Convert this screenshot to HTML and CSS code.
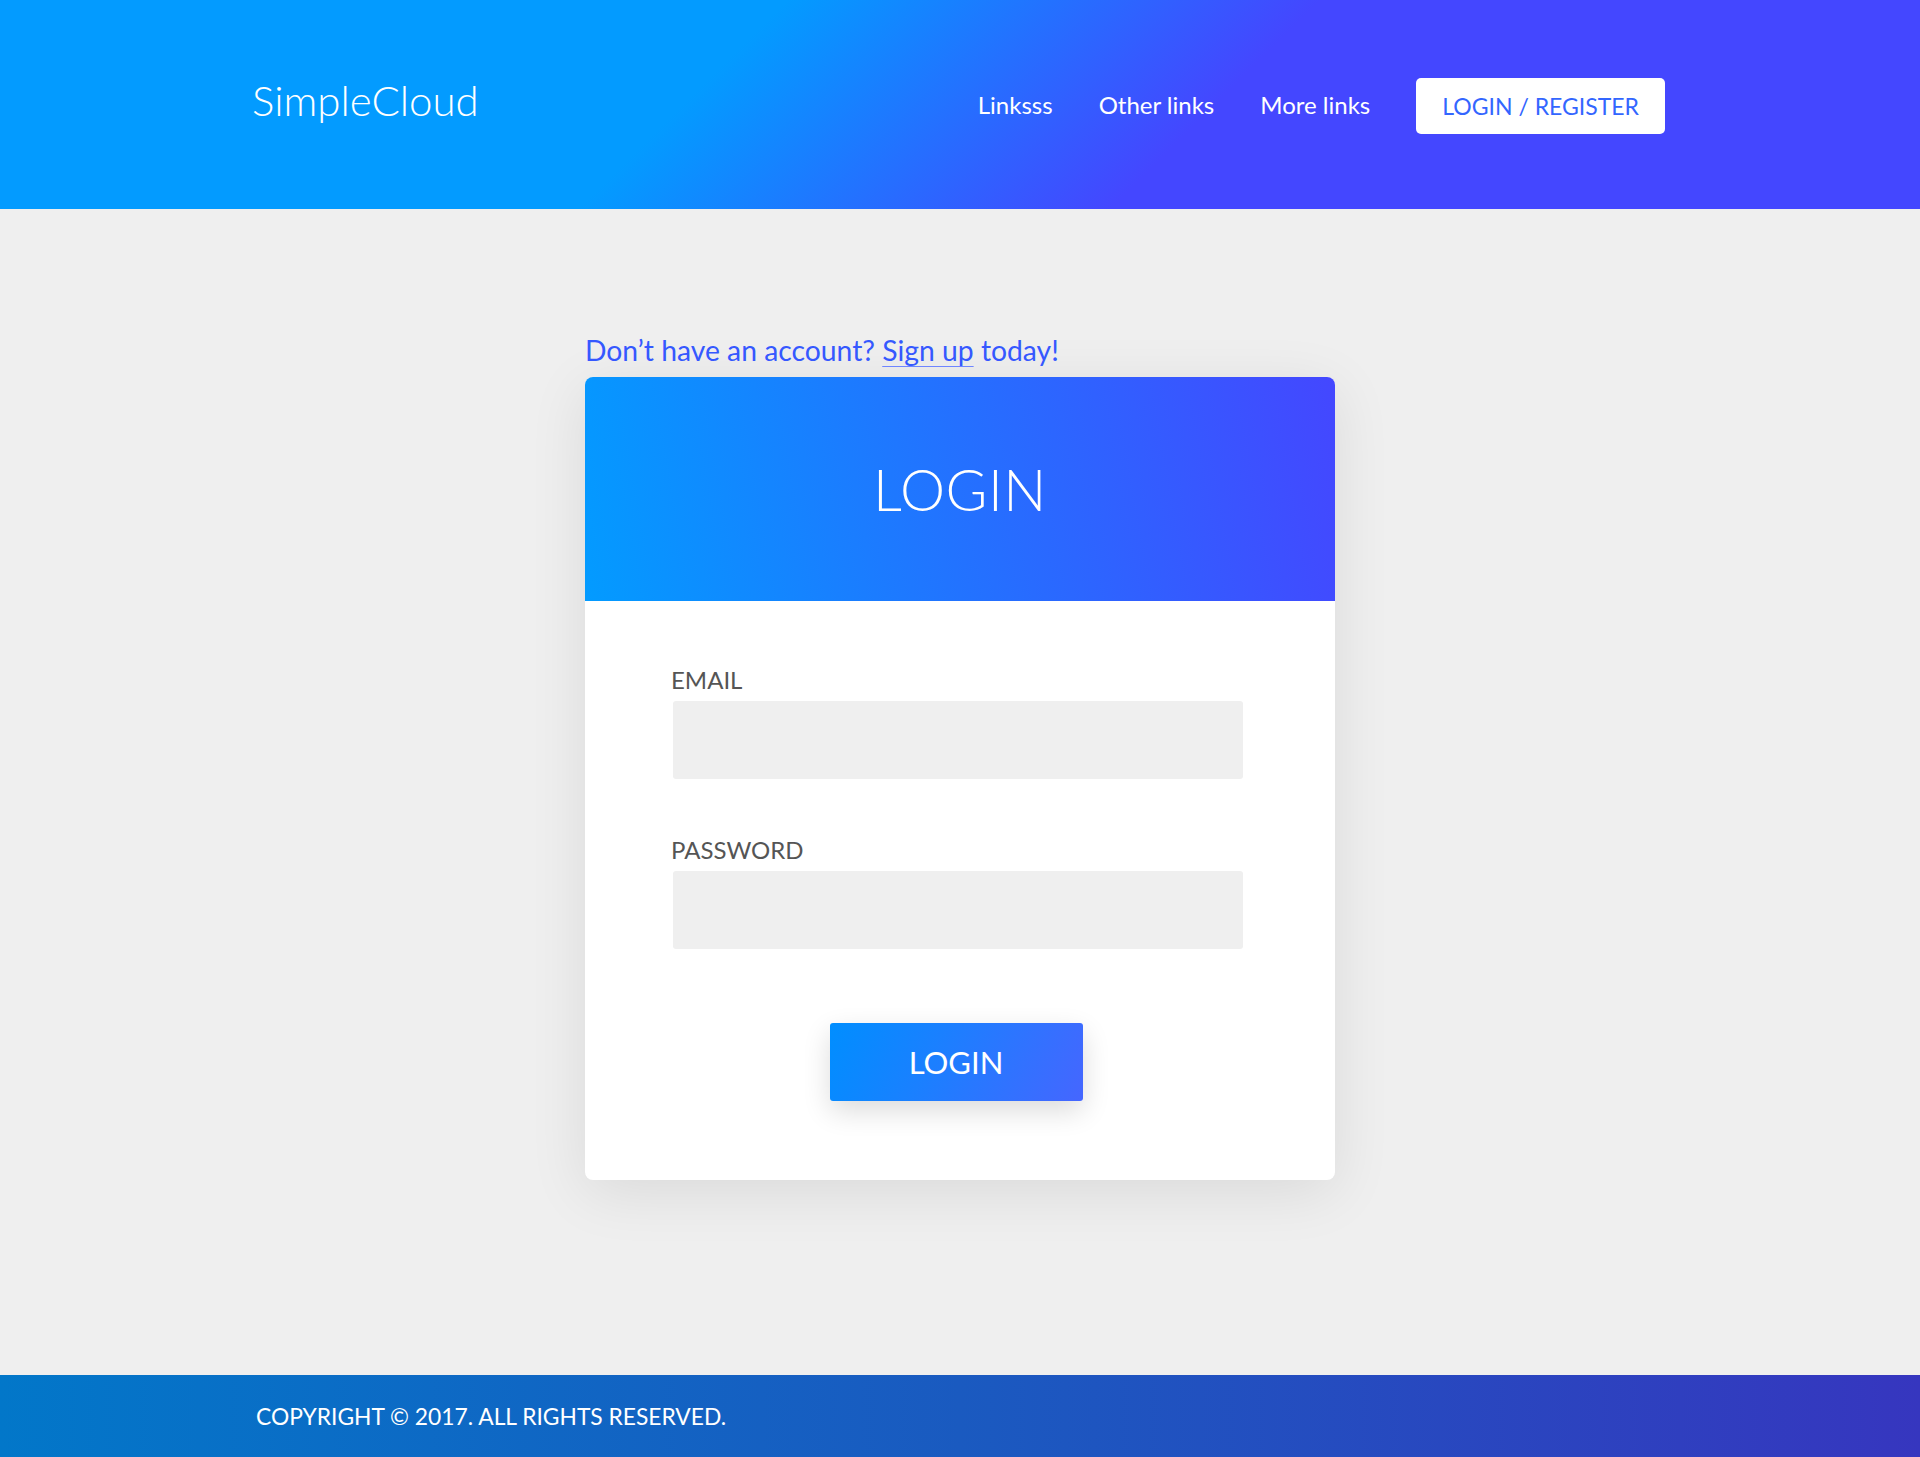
FILE: index.html
```html
<!DOCTYPE html>
<html lang="en">
<head>
<meta charset="utf-8">
<title>SimpleCloud - Login</title>
<link rel="stylesheet" href="styles.css">
</head>
<body>
<header class="topbar">
  <div class="container topbar-inner">
    <a class="logo" href="#">SimpleCloud</a>
    <nav class="nav">
      <a class="nav-link" href="#">Linksss</a>
      <a class="nav-link" href="#">Other links</a>
      <a class="nav-link" href="#">More links</a>
      <a class="nav-btn" href="#">LOGIN / REGISTER</a>
    </nav>
  </div>
</header>
<main class="main">
  <div class="login-wrap">
    <p class="signup">Don’t have an account? <a href="#">Sign up</a> today!</p>
    <section class="card">
      <div class="card-head">
        <h1 class="card-title">LOGIN</h1>
      </div>
      <form class="card-body">
        <label class="field-label" for="email">EMAIL</label>
        <input class="field-input" id="email" type="email">
        <label class="field-label field-label-2" for="password">PASSWORD</label>
        <input class="field-input" id="password" type="password">
        <div class="actions">
          <button class="submit" type="button">LOGIN</button>
        </div>
      </form>
    </section>
  </div>
</main>
<footer class="footer">
  <div class="container footer-inner">COPYRIGHT © 2017. ALL RIGHTS RESERVED.</div>
</footer>
</body>
</html>
```

FILE: styles.css
```css
* { box-sizing: border-box; }

html, body { margin: 0; padding: 0; }

body {
  font-family: Lato, "Open Sans", sans-serif;
  background: #efefef;
  color: #555;
  min-height: 1457px;
  display: flex;
  flex-direction: column;
}

a { text-decoration: none; }

.container {
  width: 1410px;
  margin: 0 auto;
}

.topbar {
  height: 209px;
  background: linear-gradient(135deg, #039bff 0%, #039bff 37%, #4447ff 62%, #4447ff 100%);
}

.topbar-inner {
  height: 100%;
  display: flex;
  align-items: center;
  justify-content: space-between;
}

.logo {
  color: #fff;
  font-size: 42px;
  font-weight: 300;
  margin-left: -3px;
  margin-top: -10px;
}

.nav {
  display: flex;
  align-items: center;
  gap: 46px;
}

.nav-link {
  color: #fff;
  font-size: 24px;
}

.nav-btn {
  display: block;
  background: #fff;
  color: #3366ff;
  font-size: 23px;
  height: 56px;
  line-height: 56px;
  padding: 0 26px;
  border-radius: 5px;
  margin-top: 2px;
}

.main {
  flex: 1;
  display: flex;
  justify-content: center;
}

.login-wrap {
  width: 750px;
  margin-top: 123px;
}

.signup {
  margin: 0 0 9px;
  font-size: 28.3px;
  line-height: 36px;
  color: #3558ff;
}

.signup a {
  color: #3558ff;
  text-decoration: underline;
  text-decoration-thickness: 1px;
  text-underline-offset: 5px;
  text-decoration-color: #6f86ff;
}

.card {
  background: #fff;
  border-radius: 8px;
  overflow: hidden;
  box-shadow: 0 12px 60px rgba(0, 0, 0, 0.09);
}

.card-head {
  height: 224px;
  display: flex;
  align-items: center;
  justify-content: center;
  background: linear-gradient(80deg, #039bff 0%, #4447ff 100%);
}

.card-title {
  margin: 0;
  color: #fff;
  font-size: 57px;
  font-weight: 300;
  letter-spacing: 0.5px;
}

.card-body {
  display: flex;
  flex-direction: column;
  padding: 63px 92px 79px 88px;
}

.field-label {
  font-size: 24px;
  line-height: 32px;
  color: #555;
  margin-left: -2px;
}

.field-label-2 {
  margin-top: 55px;
}

.field-input {
  margin-top: 5px;
  height: 78px;
  border: none;
  border-radius: 3px;
  background: #efefef;
  font: inherit;
  padding: 0 16px;
  outline: none;
}

.actions {
  display: flex;
  justify-content: center;
  margin-top: 74px;
}

.submit {
  width: 253px;
  height: 78px;
  border: none;
  border-radius: 3px;
  color: #fff;
  font-family: inherit;
  font-size: 31px;
  background: linear-gradient(115deg, #008eff 0%, #1a80ff 40%, #4566ff 100%);
  box-shadow: 0 10px 28px rgba(0, 0, 0, 0.14);
  margin-left: -4px;
  cursor: pointer;
}

.footer {
  height: 82px;
  background: linear-gradient(90deg, #0277c9 0%, #1a5ac0 50%, #3636bf 100%);
}

.footer-inner {
  height: 100%;
  display: flex;
  align-items: center;
  color: #fff;
  font-size: 22.8px;
  padding-left: 1px;
}
```
